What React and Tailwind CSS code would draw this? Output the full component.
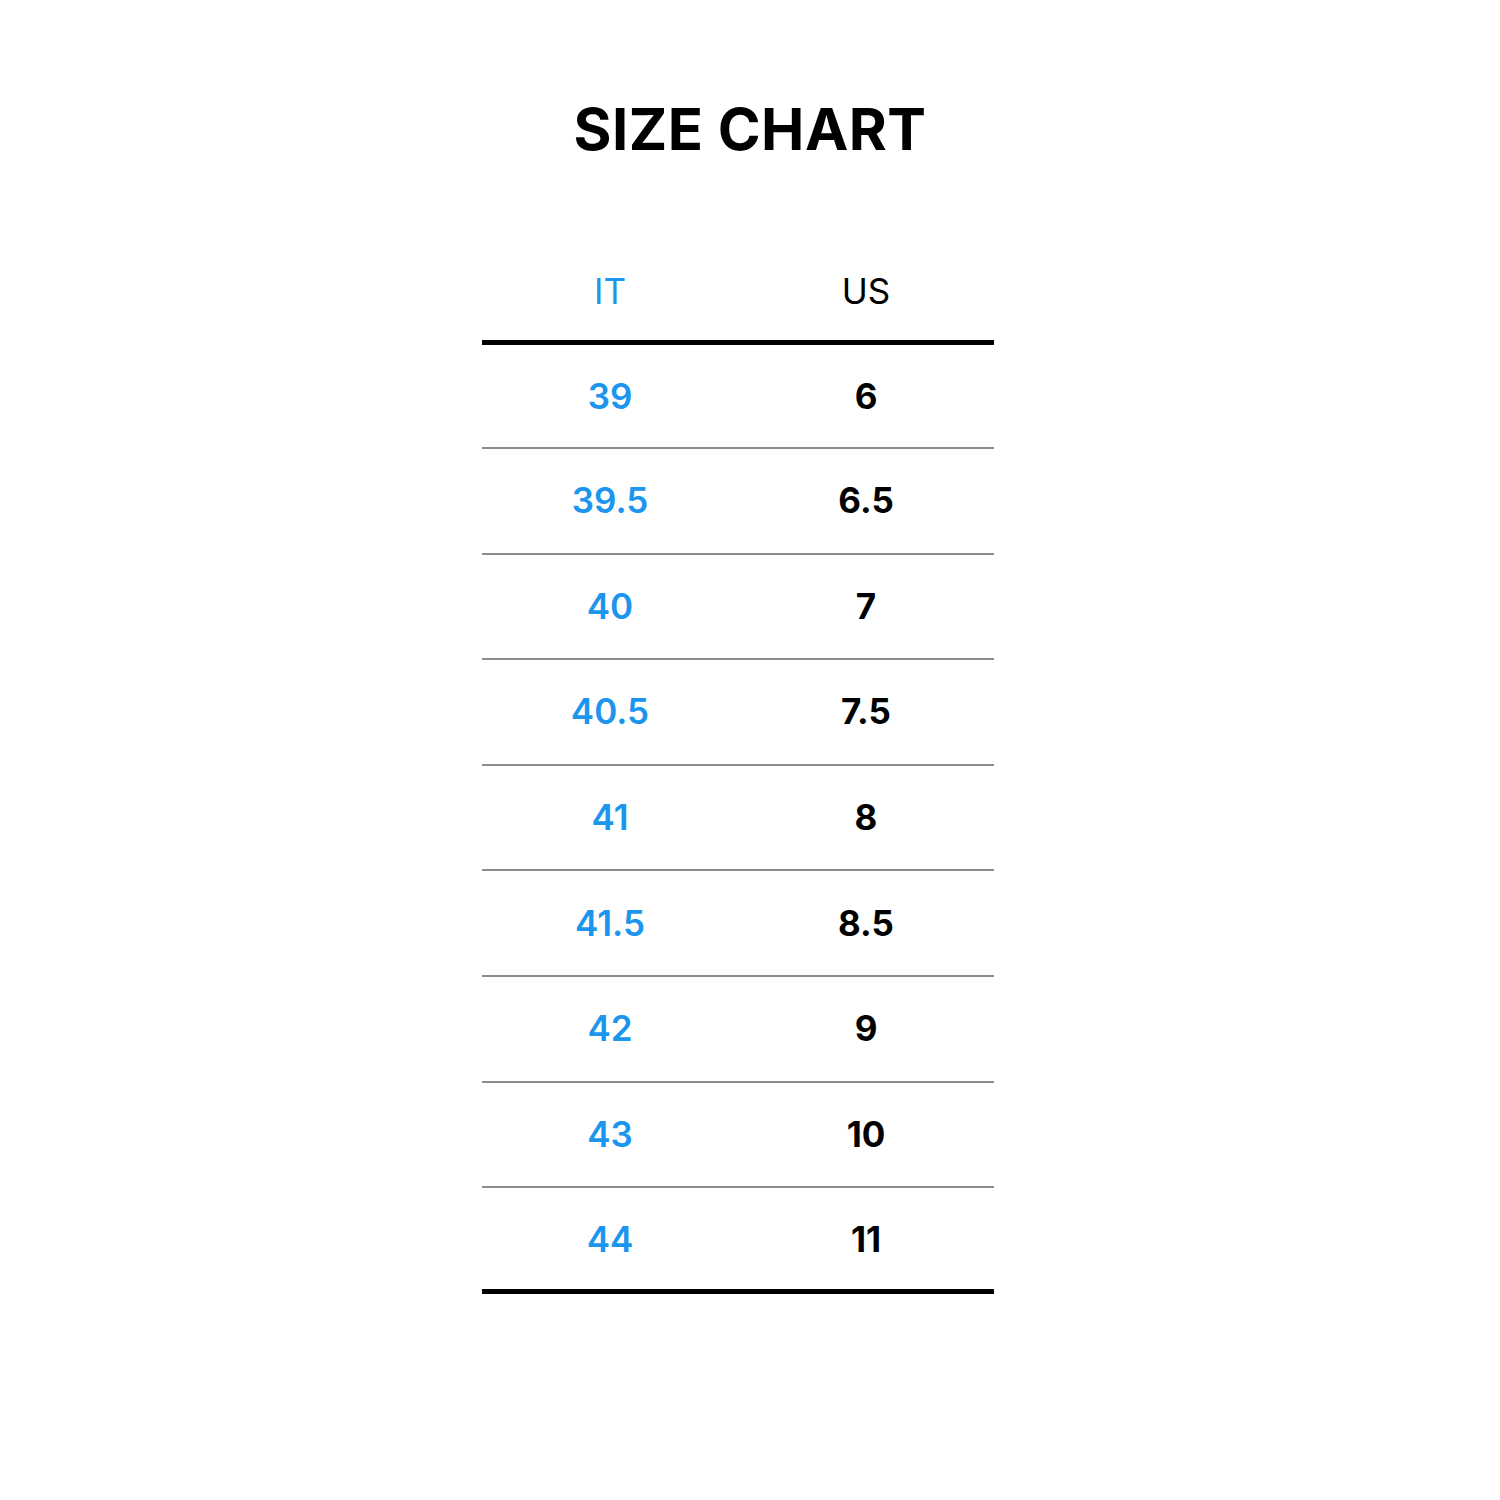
import React from "react";

const sizes = [
    ["39", "6"],
    ["39.5", "6.5"],
    ["40", "7"],
    ["40.5", "7.5"],
    ["41", "8"],
    ["41.5", "8.5"],
    ["42", "9"],
    ["43", "10"],
    ["44", "11"],
];

const App = () => {
    return (
        <div className="w-[1500px] h-[1500px] bg-white font-['Inter',sans-serif]">
            <h1 className="pt-[90px] text-center text-[58px] leading-[78px] font-bold tracking-[0.5px] text-black">
                SIZE CHART
            </h1>
            <div className="ml-[482px] mt-[97px] w-[512px]">
                <div className="grid grid-cols-2 h-[80px] pb-[22px] items-center border-b-[5px] border-black text-[35px] leading-none">
                    <span className="text-center text-[#1b95ee]">IT</span>
                    <span className="text-center text-black">US</span>
                </div>
                {sizes.map(([it, us], i) => (
                    <div
                        key={it}
                        className={
                            i === sizes.length - 1
                                ? "grid grid-cols-2 h-[106px] pt-[2px] items-center border-b-[5px] border-black text-[35px] leading-none"
                                : i === 0
                                ? "grid grid-cols-2 h-[104px] items-center border-b-2 border-[#8c8c8c] text-[35px] leading-none"
                                : "grid grid-cols-2 h-[105.6px] items-center border-b-2 border-[#8c8c8c] text-[35px] leading-none"
                        }
                    >
                        <span className="text-center font-semibold text-[#1b95ee]">{it}</span>
                        <span className="text-center font-bold text-black">{us}</span>
                    </div>
                ))}
            </div>
        </div>
    );
};

export default App;
